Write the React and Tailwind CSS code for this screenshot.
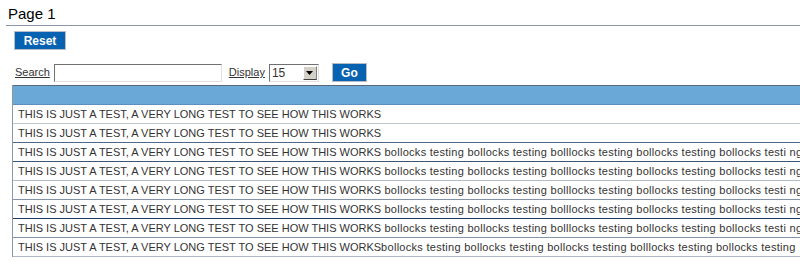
import React from "react";

const base = "THIS IS JUST A TEST, A VERY LONG TEST TO SEE HOW THIS WORKS";
const tail = " bollocks testing bollocks testing bolllocks testing bollocks testing bollocks testi ng";
const tail8 = "bollocks testing bollocks testing bollocks testing bolllocks testing bollocks testing";
const rows = [
  { t: base, x: "", b: "border-[#c0c6d0]" },
  { t: base, x: "", b: "border-[#50688a]" },
  { t: base, x: tail, b: "border-[#3e5676]" },
  { t: base, x: tail, b: "border-[#b4bcc8]" },
  { t: base, x: tail, b: "border-[#8392a8]" },
  { t: base, x: tail, b: "border-[#1f3a5c]" },
  { t: base, x: tail, b: "border-[#8595ac]" },
  { t: base, x: tail8, b: "border-[#b0b8c6]" },
];

export default function App() {
  return (
    <div className="w-[800px] h-[262px] overflow-hidden bg-white text-[#333] font-['Liberation_Sans',Arial,sans-serif]">
      <div className="ml-[6px] h-[26px] border-b border-[#8c96a8] pl-[2px] pt-[5px] text-[15px] leading-[18px] text-black">
        Page 1
      </div>
      <div className="ml-[14px] mt-[5px] w-[52px] h-[19px] border border-[#b8bcc4] bg-[#0862b2] flex items-center justify-center text-white font-bold text-[12px] leading-none">
        Reset
      </div>
      <div className="mt-[13px] ml-[15px] flex items-center h-[19px] text-[11px]">
        <span className="underline">Search</span>
        <div className="ml-[4px] w-[168px] h-[18px] border border-t-[#707070] border-l-[#707070] border-r-[#e0e0e0] border-b-[#e0e0e0] bg-white"></div>
        <span className="ml-[7px] underline">Display</span>
        <div className="ml-[4px] w-[50px] h-[18px] border border-t-[#707070] border-l-[#707070] border-r-[#e0e0e0] border-b-[#e0e0e0] bg-white flex items-center">
          <span className="pl-[2px] flex-1 text-[12px]">15</span>
          <div className="w-[14px] h-[14px] mr-[1px] bg-[#d4d0c8] border border-t-white border-l-white border-r-[#808080] border-b-[#404040] flex items-center justify-center">
            <svg width="7" height="4" viewBox="0 0 7 4"><path d="M0 0h7L3.5 4z" fill="#000" /></svg>
          </div>
        </div>
        <div className="ml-[13px] w-[35px] h-[19px] border border-[#b8bcc4] bg-[#0862b2] flex items-center justify-center text-white font-bold text-[12px] leading-none">
          Go
        </div>
      </div>
      <div className="mt-[3px] ml-[12px] w-[788px] border-l border-[#8a98aa]">
        <div className="h-[20px] border-t border-b border-t-[#5a6878] border-b-[#5b8fbf] bg-[#6aa8d8]"></div>
        {rows.map((r, i) => (
          <div key={i} className={"h-[19px] border-b pl-[5px] flex items-center whitespace-nowrap text-[11px] " + r.b}>
            <span>{r.t}</span>
            {r.x && <span className="whitespace-pre tracking-[0.28px]">{r.x}</span>}
          </div>
        ))}
      </div>
    </div>
  );
}
